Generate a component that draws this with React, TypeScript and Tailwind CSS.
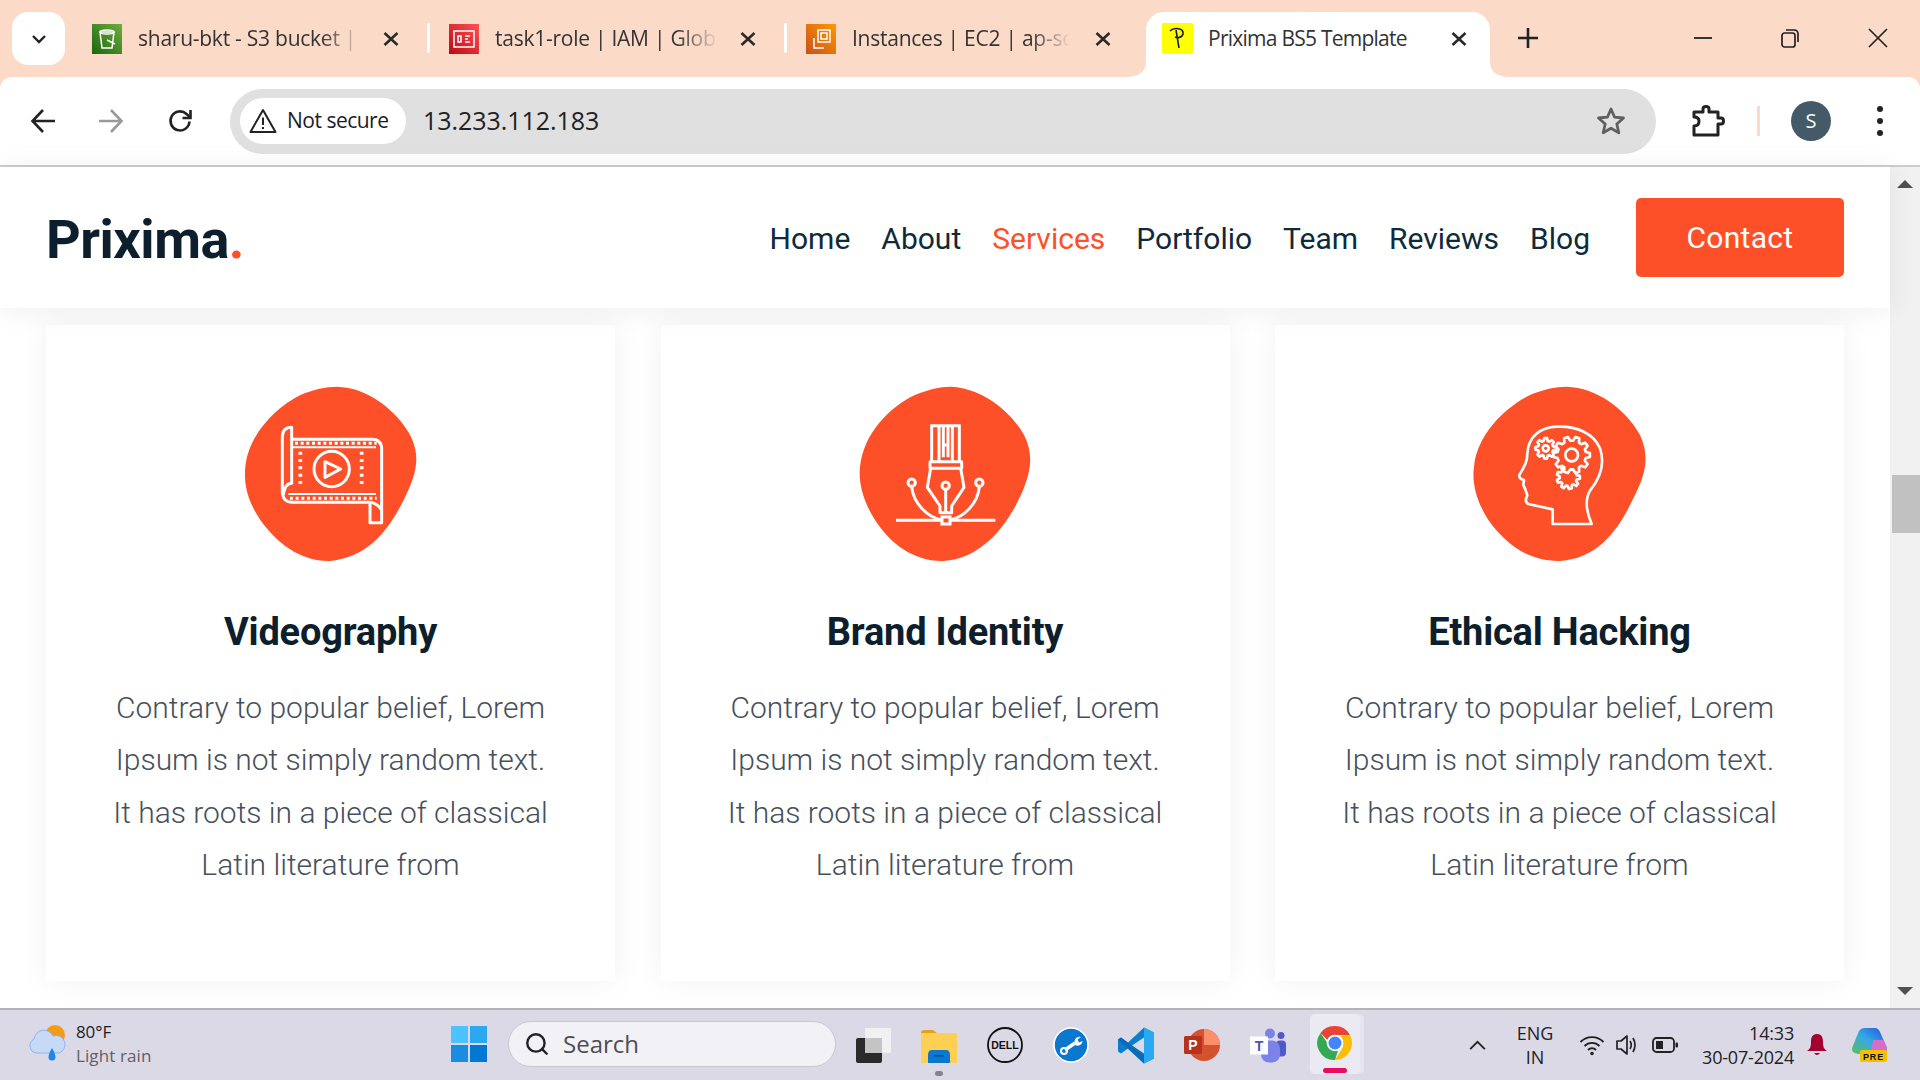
import { Search } from "lucide-react";

const orange = "#fe5028";

const services = [
  { title: "Videography", icon: <FilmIcon /> },
  { title: "Brand Identity", icon: <PenIcon /> },
  { title: "Ethical Hacking", icon: <HeadIcon /> },
];

const lines = [
  "Contrary to popular belief, Lorem",
  "Ipsum is not simply random text.",
  "It has roots in a piece of classical",
  "Latin literature from",
];

function gearPath(cx: number, cy: number, r1: number, r2: number, teeth: number) {
  const pts: string[] = [];
  for (let i = 0; i < teeth; i++) {
    const a = (i / teeth) * Math.PI * 2;
    const s = (Math.PI * 2) / teeth / 4;
    [
      [a - s * 1.4, r1],
      [a - s * 0.7, r2],
      [a + s * 0.7, r2],
      [a + s * 1.4, r1],
    ].forEach(([t, r]) => pts.push(`${(cx + Math.cos(t) * r).toFixed(1)},${(cy + Math.sin(t) * r).toFixed(1)}`));
  }
  return "M" + pts.join("L") + "Z";
}

function FilmIcon() {
  return (
    <svg viewBox="0 0 660 600" className="w-[220px] h-[200px]" fill="none" stroke="#fff" strokeWidth="9">
      <path fill={orange} stroke="none" d="M350 50C440 52 530 120 572 200C600 260 590 310 550 390C510 470 450 560 330 573C240 575 170 520 120 450C80 390 70 340 75 290C85 190 170 110 240 75C280 58 315 50 350 50Z" transform="translate(-2 0)" />
      <g transform="translate(-3 0)">
        <path d="M215 208H455Q485 208 485 238V458H450V400" strokeLinejoin="round" />
        <path d="M190 375Q195 340 215 340V172Q188 172 187 200V370Q190 395 215 397H450Q470 398 485 420" strokeLinejoin="round" />
        <path d="M215 232H468M205 372H468" strokeWidth="6" />
        <path d="M225 220H470M210 385H470" stroke="#fff" strokeWidth="9" strokeDasharray="9 8" />
        <path d="M241 245V355M425 245V355" strokeWidth="11" strokeDasharray="9 13" />
        <circle cx="335" cy="297" r="53" />
        <path d="M315 275L362 297L315 322Z" strokeLinejoin="round" />
      </g>
    </svg>
  );
}

function PenIcon() {
  return (
    <svg viewBox="0 0 660 600" className="w-[220px] h-[200px]" fill="none" stroke="#fff" strokeWidth="9">
      <g transform="translate(15 0)">
        <path fill={orange} stroke="none" d="M330 50C420 52 510 120 552 195C580 250 575 300 545 370C505 460 430 565 310 573C220 575 150 520 105 450C70 395 55 340 60 290C70 190 150 110 225 75C265 58 300 50 330 50Z" />
        <path d="M275 275V167H358V275M297 167V275M337 167V275M310 167V262M324 167V262M310 225H324" />
        <path d="M270 275H365V295H270Z" strokeLinejoin="round" />
        <path d="M272 295L262 352L300 408V428H335V408L372 352L362 295M317 358V425" strokeLinejoin="round" />
        <circle cx="317" cy="347" r="11" />
        <circle cx="215" cy="338" r="11" />
        <circle cx="418" cy="338" r="11" />
        <path d="M215 350C220 400 262 442 305 450M418 350C414 400 372 442 330 450" />
        <path d="M168 451H305M330 451H466" />
        <path d="M306 441H330V462H306Z" />
      </g>
    </svg>
  );
}

function HeadIcon() {
  return (
    <svg viewBox="0 0 660 600" className="w-[220px] h-[200px]" fill="none" stroke="#fff" strokeWidth="8">
      <path fill={orange} stroke="none" d="M350 50C440 52 530 120 570 195C598 255 590 310 550 385C510 470 450 565 330 573C235 575 165 520 115 450C80 395 65 340 72 290C82 190 170 110 240 75C280 58 315 50 350 50Z" />
      <path d="M308 462H425Q398 400 420 362C458 315 462 270 450 235C430 190 380 167 320 170C270 172 235 200 232 250C232 278 222 290 208 315Q206 326 222 330L220 345L226 358L232 376Q222 395 235 402L308 418Z" strokeLinejoin="round" />
      <path d={gearPath(287, 235, 23, 31, 8)} strokeLinejoin="round" />
      <circle cx="287" cy="235" r="9" />
      <path d={gearPath(355, 322, 26, 35, 9)} strokeLinejoin="round" />
      <path d={gearPath(365, 255, 43, 55, 10)} fill={orange} strokeLinejoin="round" />
      <circle cx="365" cy="255" r="19" />
    </svg>
  );
}

function ServiceCard({ title, icon }: { title: string; icon: React.ReactNode }) {
  return (
    <div className="w-[569px] h-[656px] bg-white shadow-[0_0_30px_rgba(0,0,0,0.06)] flex flex-col items-center pt-[45px]">
      {icon}
      <h3 className="mt-[39px] font-['Roboto',sans-serif] font-bold text-[38px] leading-[46px] text-[#0d1e2d] tracking-[-0.2px]">{title}</h3>
      <div className="mt-[27px] text-center font-['Roboto',sans-serif] font-light text-[30px] leading-[52.4px] text-[#46505c]">
        {lines.map((l) => (
          <p key={l}>{l}</p>
        ))}
      </div>
    </div>
  );
}

function CloseX({ className = "" }: { className?: string }) {
  return (
    <svg viewBox="0 0 20 20" className={"w-5 h-5 shrink-0 " + className} stroke="#2a2a2a" strokeWidth="2.6">
      <path d="M3.5 4L16.5 16M16.5 4L3.5 16" />
    </svg>
  );
}

function BgTab({ w, pl, textW, gap, label, favicon }: { w: number; pl: number; textW: number; gap: number; label: string; favicon: React.ReactNode }) {
  return (
    <div className="flex items-center h-[31px] mt-[23px] shrink-0" style={{ width: w, paddingLeft: pl }}>
      {favicon}
      <span
        className="ml-4 text-[21px] text-[#333] tracking-[-0.25px] whitespace-nowrap overflow-hidden [mask-image:linear-gradient(to_right,black_82%,transparent)]"
        style={{ width: textW, marginRight: gap }}
      >
        {label}
      </span>
      <CloseX />
    </div>
  );
}

function TabSep() {
  return <div className="w-[3px] h-[30px] mt-[23px] bg-white rounded-full shrink-0" />;
}

function Favicon({ from, to, children }: { from: string; to: string; children: React.ReactNode }) {
  return (
    <svg viewBox="0 0 30 30" className="w-[30px] h-[30px] shrink-0">
      <defs>
        <linearGradient id={from.slice(1)} x1="0" y1="1" x2="1" y2="0">
          <stop offset="0" stopColor={from} />
          <stop offset="1" stopColor={to} />
        </linearGradient>
      </defs>
      <rect width="30" height="30" fill={`url(#${from.slice(1)})`} />
      <g fill="none" stroke="#fff" strokeWidth="1.5">{children}</g>
    </svg>
  );
}

function BrowserChrome() {
  return (
    <div className="bg-[#fcdac8] shrink-0 font-['Open_Sans',sans-serif]">
      <div className="h-[77px] flex items-start">
        <div className="ml-3 mt-3 w-[53px] h-[53px] bg-white rounded-[16px] flex items-center justify-center shrink-0">
          <svg viewBox="0 0 16 16" className="w-4 h-4" fill="none" stroke="#222" strokeWidth="2.4"><path d="M2 5L8 11L14 5" /></svg>
        </div>
        <BgTab w={362} pl={27} textW={224} gap={19} label="sharu-bkt - S3 bucket | S3" favicon={
          <Favicon from="#1b660f" to="#6cae3e"><path d="M8 8H22L20 24H10ZM15 16L23 20" /><ellipse cx="15" cy="8" rx="7" ry="2" /></Favicon>
        } />
        <TabSep />
        <BgTab w={354} pl={19} textW={223} gap={20} label="task1-role | IAM | Global" favicon={
          <Favicon from="#bd0816" to="#ff5252"><rect x="5" y="7" width="20" height="16" /><path d="M9 12h3v6H9zM16 12h5M16 15h3M16 18h5" /></Favicon>
        } />
        <TabSep />
        <BgTab w={359} pl={19} textW={218} gap={23} label="Instances | EC2 | ap-south-1" favicon={
          <Favicon from="#c8511b" to="#ff9900"><rect x="12" y="6" width="12" height="12" /><path d="M8 14V24H18" /><rect x="15" y="9" width="6" height="6" /></Favicon>
        } />
        {/* active tab */}
        <div className="relative mt-3 h-[65px] w-[344px] bg-white rounded-t-[18px] flex items-center pl-4 pb-[12px] shrink-0">
          <svg viewBox="0 0 20 16" className="absolute bottom-0 left-[-20px] w-5 h-4"><path d="M20 0V16H0Q20 16 20 0Z" fill="#fff" /></svg>
          <svg viewBox="0 0 20 16" className="absolute bottom-0 right-[-20px] w-5 h-4"><path d="M0 0V16H20Q0 16 0 0Z" fill="#fff" /></svg>
          <svg viewBox="0 0 31 31" className="w-[31px] h-[31px] shrink-0" fill="none">
            <rect width="31" height="31" rx="2" fill="#ffff00" />
            <path d="M8 8C12 4 22 5 21 11C20 15 15 15 13 14M14 7L17 25" stroke="#1b1b4b" strokeWidth="1.6" />
          </svg>
          <span className="ml-[15px] w-[241px] text-[21px] text-[#333] tracking-[-0.75px] whitespace-nowrap">Prixima BS5 Template</span>
          <CloseX />
        </div>
        <svg viewBox="0 0 22 22" className="w-[22px] h-[22px] ml-[27px] mt-[27px] shrink-0" stroke="#222" strokeWidth="2.6"><path d="M11 1V21M1 11H21" /></svg>
        <svg viewBox="0 0 20 20" className="w-5 h-5 ml-[154px] mt-[28px] shrink-0" stroke="#222" strokeWidth="1.8"><path d="M1 10H19" /></svg>
        <svg viewBox="0 0 20 20" className="w-5 h-5 ml-[67px] mt-[28px] shrink-0" fill="none" stroke="#222" strokeWidth="1.7"><rect x="2" y="5" width="13" height="14" rx="2.5" /><path d="M6 2H14Q18 2 18 6V14" /></svg>
        <svg viewBox="0 0 20 20" className="w-5 h-5 ml-[68px] mt-[28px] shrink-0" stroke="#222" strokeWidth="1.7"><path d="M1 1L19 19M19 1L1 19" /></svg>
      </div>
      <div className="h-[88px] bg-white rounded-t-[12px] flex items-center">
        <svg viewBox="0 0 26 26" className="w-[26px] h-[26px] ml-[30px] shrink-0" fill="none" stroke="#222" strokeWidth="2.6"><path d="M25 13H3M13 2L2.5 13L13 24" /></svg>
        <svg viewBox="0 0 26 26" className="w-[26px] h-[26px] ml-[42px] shrink-0" fill="none" stroke="#9a9a9a" strokeWidth="2.6"><path d="M1 13H23M13 2L23.5 13L13 24" /></svg>
        <svg viewBox="0 0 26 26" className="w-[26px] h-[26px] ml-[43px] shrink-0" fill="none" stroke="#222" strokeWidth="2.6"><path d="M22.5 13.5A9.5 9.5 0 1 1 19.5 6L23 9" /><path d="M23.5 2V10H15.5" /></svg>
        <div className="ml-[37px] w-[1426px] h-[65px] bg-[#e0e0e0] rounded-full flex items-center pl-[10px] pr-[30px] shrink-0">
          <div className="w-[166px] h-[46px] bg-white rounded-full flex items-center pl-[9px] gap-[10px] shrink-0">
            <svg viewBox="0 0 28 26" className="w-[28px] h-[26px] shrink-0" fill="none" stroke="#222" strokeWidth="2"><path d="M14 2L26.5 24H1.5Z" strokeLinejoin="round" /><path d="M14 9.5V17M14 19V21" /></svg>
            <span className="text-[21px] text-[#1c1c28] tracking-[-0.5px] whitespace-nowrap">Not secure</span>
          </div>
          <span className="ml-[17px] text-[25px] text-[#222] tracking-[-0.05px]">13.233.112.183</span>
          <svg viewBox="0 0 30 30" className="w-[30px] h-[30px] ml-auto shrink-0" fill="none" stroke="#5f5f5f" strokeWidth="2.8"><path d="M15 3L18.6 11.2L27.5 12L20.8 18L22.8 26.8L15 22.2L7.2 26.8L9.2 18L2.5 12L11.4 11.2Z" strokeLinejoin="round" /></svg>
        </div>
        <svg viewBox="0 0 34 32" className="w-[34px] h-[32px] ml-[35px] shrink-0" fill="none" stroke="#222" strokeWidth="3"><path d="M3 7H12V4Q12 1.5 15 1.5Q18 1.5 18 4V7H27V13H30Q32.5 13 32.5 16Q32.5 19 30 19H27V30H3V21Q8 21 8 16Q8 12 3 12Z" strokeLinejoin="round" /></svg>
        <div className="w-[3px] h-[30px] ml-[32px] bg-[#fcdac8] shrink-0" />
        <div className="ml-[31px] w-[40px] h-[40px] rounded-full bg-[#455a68] text-white text-[20px] flex items-center justify-center shrink-0">S</div>
        <div className="ml-[46px] flex flex-col gap-[6px] shrink-0">
          <span className="w-[6px] h-[6px] rounded-full bg-[#222]" />
          <span className="w-[6px] h-[6px] rounded-full bg-[#222]" />
          <span className="w-[6px] h-[6px] rounded-full bg-[#222]" />
        </div>
      </div>
      <div className="h-[2px] bg-[#cdcdcd]" />
    </div>
  );
}

function Scrollbar() {
  return (
    <div className="w-[30px] bg-[#f1f1f1] flex flex-col items-center shrink-0">
      <div className="mt-[13px] w-0 h-0 border-x-[8px] border-x-transparent border-b-[8px] border-b-[#505050]" />
      <div className="mt-[287px] ml-[2px] w-[28px] h-[58px] bg-[#c1c1c1]" />
      <div className="mt-auto mb-[13px] w-0 h-0 border-x-[8px] border-x-transparent border-t-[8px] border-t-[#505050]" />
    </div>
  );
}

function Page() {
  const nav = ["Home", "About", "Services", "Portfolio", "Team", "Reviews", "Blog"];
  return (
    <div className="flex h-[841px] shrink-0 bg-white">
      <div className="flex-1 flex flex-col min-w-0 font-['Roboto',sans-serif]">
        <header className="relative z-10 h-[141px] bg-white shadow-[0_2px_28px_rgba(0,0,0,0.07)] flex items-center pl-[46px] pr-[46px] shrink-0">
          <div className="text-[54px] font-bold text-[#0d1e2d] tracking-[-0.5px] leading-none mt-[5px]">
            Prixima<span style={{ color: orange }}>.</span>
          </div>
          <nav className="ml-auto flex items-center gap-[31px] text-[30px] text-[#0f2a3a] mt-[1px]">
            {nav.map((n) => (
              <a key={n} className={n === "Services" ? "text-[#fe5028]" : ""}>{n}</a>
            ))}
          </nav>
          <button className="ml-[46px] w-[208px] h-[79px] rounded-[5px] bg-[#fe5028] text-white text-[30px] tracking-[0.3px]">Contact</button>
        </header>
        <div className="flex justify-between px-[46px] pt-[17px]">
          {services.map((s) => (
            <ServiceCard key={s.title} {...s} />
          ))}
        </div>
      </div>
      <Scrollbar />
    </div>
  );
}

function TaskIcon({ children, ml = 30 }: { children: React.ReactNode; ml?: number }) {
  return <div className="w-9 h-9 shrink-0 flex items-center justify-center" style={{ marginLeft: ml }}>{children}</div>;
}

function Taskbar() {
  return (
    <div className="h-[72px] bg-[#dcd9e7] border-t-[2px] border-[#b4b2b9] flex items-center shrink-0 font-['Open_Sans',sans-serif] text-[#222]">
      <svg viewBox="0 0 38 38" className="w-[38px] h-[38px] ml-[28px] -mt-[4px] shrink-0">
        <circle cx="27" cy="11" r="10" fill="#f59a15" />
        <path d="M8 29A7.5 7.5 0 0 1 6 15A10 10 0 0 1 25 12A8.5 8.5 0 0 1 31 29Z" fill="#c6daf8" stroke="#8fb4ea" />
        <path d="M24 24Q27.5 30 27.5 33A3.5 3.5 0 0 1 20.5 33Q20.5 30 24 24Z" fill="#1e86e8" />
      </svg>
      <div className="ml-[10px] w-[118px] shrink-0 leading-[24px] -mt-[3px]">
        <div className="text-[17px] text-[#1e1e1e] tracking-[-0.1px]">80°F</div>
        <div className="text-[17px] text-[#5f5f68] tracking-[0.1px] whitespace-nowrap">Light rain</div>
      </div>
      <svg viewBox="0 0 36 36" className="w-9 h-9 ml-[257px] -mt-[2px] shrink-0">
        <rect width="17" height="17" fill="#4cc2ff" />
        <rect x="19" width="17" height="17" fill="#2aa9f0" />
        <rect y="19" width="17" height="17" fill="#1a8de0" />
        <rect x="19" y="19" width="17" height="17" fill="#0078d4" />
      </svg>
      <div className="ml-[21px] w-[328px] h-[46px] -mt-[2px] bg-[#f2f1f6] rounded-full border border-[#c9c7d0] flex items-center pl-[15px] gap-[13px] shrink-0">
        <Search className="w-[26px] h-[26px] text-[#222]" strokeWidth={2.2} />
        <span className="text-[24px] text-[#4d4d55]">Search</span>
      </div>
      <TaskIcon ml={19}>
        <svg viewBox="0 0 36 36" className="w-9 h-9">
          <rect x="1" y="11" width="26" height="25" rx="2" fill="#2a2a2a" />
          <rect x="10" y="1" width="26" height="25" rx="1" fill="#f6f6f6" fillOpacity="0.8" />
          <rect x="10" y="11" width="17" height="15" fill="#c4c4c4" />
        </svg>
      </TaskIcon>
      <div className="relative w-9 h-9 shrink-0 ml-[30px]">
        <svg viewBox="0 0 36 36" className="w-9 h-9">
          <path d="M0 6Q0 3 3 3H12L16 6V10H0Z" fill="#e0a11c" />
          <rect y="6" width="36" height="30" rx="1" fill="#fdcf52" />
          <path d="M7 28Q7 23 11 23H25Q29 23 29 28V36H7Z" fill="#0a78d0" />
          <rect x="13" y="28" width="10" height="1.5" fill="#054a86" />
        </svg>
        <span className="absolute left-[14px] top-[44px] w-[8px] h-[5px] rounded-full bg-[#85838c]" />
      </div>
      <TaskIcon>
        <svg viewBox="0 0 36 36" className="w-9 h-9">
          <circle cx="18" cy="18" r="17" fill="none" stroke="#111" strokeWidth="1.8" />
          <text x="18" y="21.5" textAnchor="middle" fontSize="10.5" fontWeight="800" fontFamily="Liberation Sans" fill="#111">DELL</text>
        </svg>
      </TaskIcon>
      <TaskIcon>
        <svg viewBox="0 0 36 36" className="w-9 h-9">
          <circle cx="18" cy="18" r="17" fill="#0b78d0" stroke="#fff" strokeWidth="1.6" />
          <path d="M12 23L22 16" fill="none" stroke="#fff" strokeWidth="3.4" />
          <path d="M21.5 14A5 5 0 0 1 28 10L24.5 12.5L26 15.5L29.5 14A5 5 0 0 1 22 18Z" fill="#fff" />
          <circle cx="11" cy="24" r="3" fill="none" stroke="#fff" strokeWidth="2" />
        </svg>
      </TaskIcon>
      <TaskIcon ml={29}>
        <svg viewBox="0 0 36 36" className="w-[37px] h-[37px]">
          <path d="M26 0L36 5V31L26 36L10 21L3 26L0 24V12L3 10L10 15Z" fill="#0b7fce" />
          <path d="M26 0L36 5V31L26 36Z" fill="#29a9f2" />
          <path d="M26 10L14 18L26 26Z" fill="#dcd9e7" />
          <path d="M3 10L26 27V36L0 12Z" fill="#0a6cb4" />
        </svg>
      </TaskIcon>
      <TaskIcon ml={30}>
        <svg viewBox="0 0 36 36" className="w-9 h-9">
          <circle cx="20" cy="18" r="16" fill="#d35230" />
          <path d="M20 2A16 16 0 0 1 36 18H20Z" fill="#ff8f6b" />
          <rect x="0" y="9" width="18" height="18" rx="1.5" fill="#b7321a" />
          <text x="9" y="23" textAnchor="middle" fontSize="14" fontWeight="700" fontFamily="Liberation Sans" fill="#fff">P</text>
        </svg>
      </TaskIcon>
      <TaskIcon ml={30}>
        <svg viewBox="0 0 36 36" className="w-[37px] h-[37px]">
          <circle cx="20" cy="6" r="5" fill="#7b83eb" />
          <circle cx="31" cy="8" r="3.5" fill="#5059c9" />
          <rect x="26" y="13" width="10" height="16" rx="4" fill="#5059c9" />
          <rect x="11" y="13" width="19" height="22" rx="8" fill="#7b83eb" />
          <rect x="0" y="9" width="18" height="18" fill="#fff" />
          <text x="9" y="23" textAnchor="middle" fontSize="14" fontWeight="700" fontFamily="Liberation Sans" fill="#4b53bc">T</text>
        </svg>
      </TaskIcon>
      {/* active app */}
      <div className="relative ml-[24px] w-[50px] h-[60px] -mt-[2px] bg-[#ebeaf2] rounded-[5px] shadow-[4px_0_0_#e6e4ee] flex items-center justify-center shrink-0">
        <svg viewBox="0 0 36 36" className="w-9 h-9 -mt-[2px]">
          <path d="M18 1A17 17 0 0 1 33 10H18A8 8 0 0 0 10.5 15L3.5 8A17 17 0 0 1 18 1Z" fill="#ea4335" />
          <path d="M33 10A17 17 0 0 1 18 35L25 24A8 8 0 0 0 26 18A8 8 0 0 0 23 11Z" fill="#fbbc04" />
          <path d="M3.5 8L11 19A8 8 0 0 0 21 25.5L18 35A17 17 0 0 1 3.5 8Z" fill="#34a853" />
          <circle cx="18" cy="18" r="8.3" fill="#fff" />
          <circle cx="18" cy="18" r="6.5" fill="#4285f4" />
        </svg>
        <span className="absolute bottom-[1px] left-[13px] w-[24px] h-[5px] rounded-full bg-[#ea0a5f]" />
      </div>
      <svg viewBox="0 0 18 12" className="w-[17px] h-[11px] ml-[109px] shrink-0" fill="none" stroke="#222" strokeWidth="2"><path d="M1 10L9 2L17 10" /></svg>
      <div className="ml-[24px] w-[50px] text-center text-[18px] leading-[24px] shrink-0">
        <div>ENG</div>
        <div>IN</div>
      </div>
      <svg viewBox="0 0 26 24" className="w-[26px] h-[24px] ml-[19px] shrink-0" fill="none" stroke="#222" strokeWidth="1.9"><path d="M1.5 9A16 16 0 0 1 24.5 9M5.5 13A10.5 10.5 0 0 1 20.5 13M9 17A5.5 5.5 0 0 1 17 17" /><circle cx="13" cy="20.5" r="1.8" fill="#222" stroke="none" /></svg>
      <svg viewBox="0 0 26 24" className="w-[26px] h-[24px] ml-[10px] shrink-0" fill="none" stroke="#222" strokeWidth="1.7"><path d="M2 8H6L12 3V21L6 16H2Z" strokeLinejoin="round" /><path d="M15 8Q17.5 12 15 16M18 5Q22 12 18 19" /></svg>
      <svg viewBox="0 0 26 18" className="w-[26px] h-[18px] ml-[11px] shrink-0" fill="none" stroke="#222" strokeWidth="1.8"><rect x="1" y="2" width="21" height="14" rx="3.5" /><rect x="4" y="5" width="7" height="8" fill="#222" stroke="none" /><rect x="23.5" y="6.5" width="2.5" height="5" rx="1" fill="#222" stroke="none" /></svg>
      <div className="ml-[2px] w-[114px] text-right text-[18px] tracking-[-0.2px] leading-[24px] shrink-0 whitespace-nowrap">
        <div>14:33</div>
        <div>30-07-2024</div>
      </div>
      <svg viewBox="0 0 20 24" className="w-[20px] h-[24px] ml-[13px] shrink-0" fill="#a50034"><path d="M10 1C5 1 4 5 4 9C4 14 3 16 0 18H20C17 16 16 14 16 9C16 5 15 1 10 1Z" /><path d="M7 20H13Q10 24 7 20Z" /></svg>
      <svg viewBox="0 0 36 34" className="w-[36px] h-[34px] ml-[24px] shrink-0">
        <defs>
          <linearGradient id="cop" x1="0" y1="1" x2="1" y2="0">
            <stop offset="0" stopColor="#5bc05a" />
            <stop offset="0.5" stopColor="#35a8e8" />
            <stop offset="1" stopColor="#2050d8" />
          </linearGradient>
        </defs>
        <path d="M8 3Q10 0 14 0H24Q27 0 29 4L36 20Q36 26 30 26H10Q0 26 1 20Z" fill="url(#cop)" />
        <path d="M22 12H32L36 20Q36 26 30 26H20Z" fill="#d86cc8" />
        <rect x="9" y="22" width="27" height="12" rx="2" fill="#f5c000" />
        <text x="22.5" y="31.5" textAnchor="middle" fontSize="9" fontWeight="700" fontFamily="Liberation Sans" fill="#111" letterSpacing="0.8">PRE</text>
      </svg>
    </div>
  );
}

export default function App() {
  return (
    <div className="w-[1920px] h-[1080px] overflow-hidden flex flex-col bg-white">
      <BrowserChrome />
      <Page />
      <Taskbar />
    </div>
  );
}
